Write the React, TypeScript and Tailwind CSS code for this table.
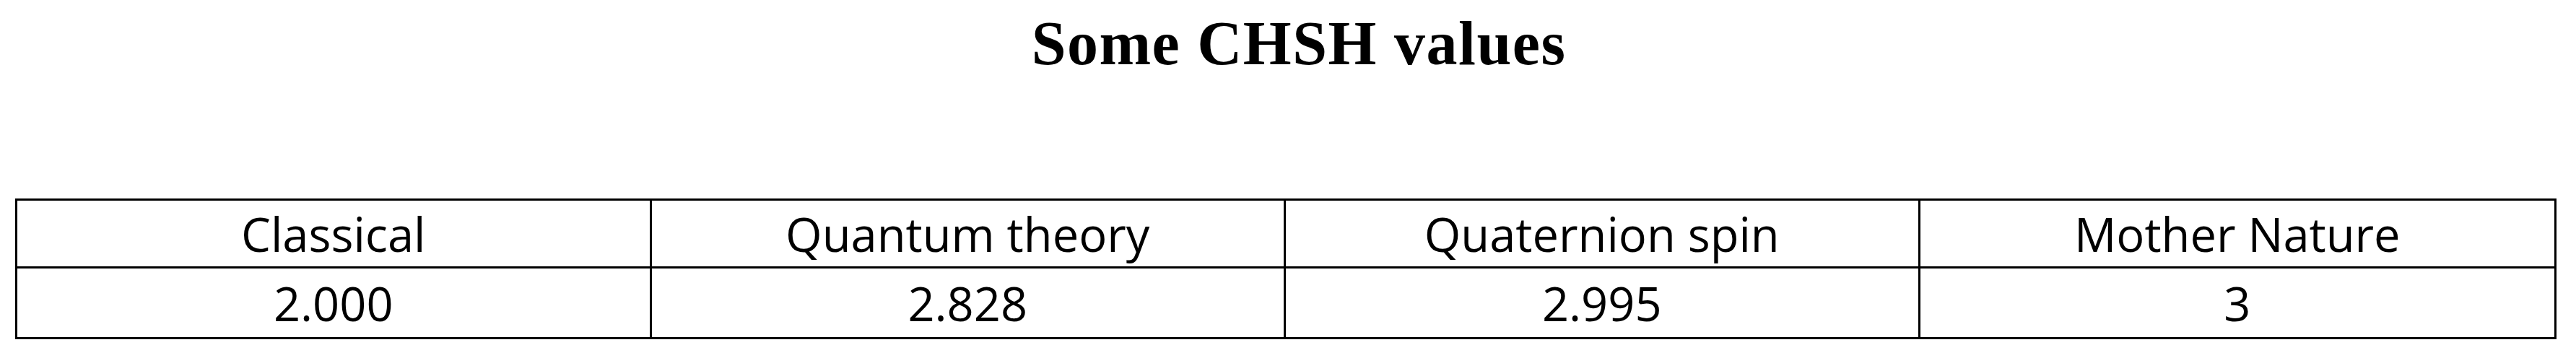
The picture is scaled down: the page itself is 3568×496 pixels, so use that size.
const headers = ["Classical", "Quantum theory", "Quaternion spin", "Mother Nature"];
const values = ["2.000", "2.828", "2.995", "3"];

function Row({ cells, height, last }: { cells: string[]; height: string; last?: boolean }) {
  return (
    <div className={`grid grid-cols-4 ${height} ${last ? "" : "border-b-[3px] border-black"}`}>
      {cells.map((c, i) => (
        <div
          key={c}
          className={`flex items-center justify-center ${i < cells.length - 1 ? "border-r-[3px] border-black" : ""}`}
        >
          <span className="text-[65px] leading-[1.2]">{c}</span>
        </div>
      ))}
    </div>
  );
}

export default function App() {
  return (
    <div className="w-[3568px] h-[496px] bg-white text-black font-['Open_Sans',sans-serif]">
      <div className="pt-[17px] pl-[30px] text-center">
        <h1 className="text-[86px] leading-none font-bold tracking-[1.5px] font-['Liberation_Serif',serif]">
          Some CHSH values
        </h1>
      </div>
      <div className="mt-[172px] ml-[21px] w-[3520px] border-[3px] border-black">
        <Row cells={headers} height="h-[94px]" />
        <Row cells={values} height="h-[95px]" last />
      </div>
    </div>
  );
}
